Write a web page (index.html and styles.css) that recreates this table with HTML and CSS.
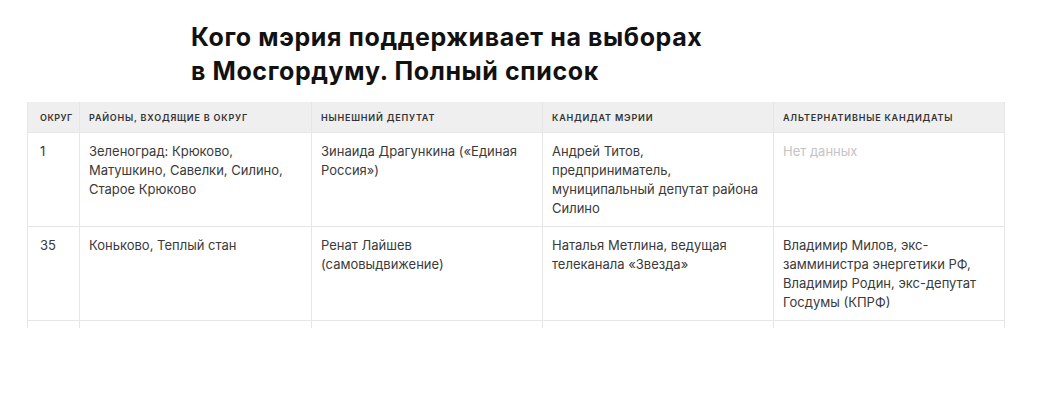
FILE: index.html
```html
<!DOCTYPE html>
<html lang="ru">
<head>
<meta charset="utf-8">
<link rel="stylesheet" href="styles.css">
</head>
<body>
<div class="page">
  <h1 class="title">Кого мэрия поддерживает на выборах<br>в Мосгордуму. Полный список</h1>
  <div class="table-wrap">
    <table class="tbl">
      <colgroup>
        <col class="c1"><col class="c2"><col class="c3"><col class="c4"><col class="c5">
      </colgroup>
      <thead>
        <tr>
          <th class="first">Округ</th>
          <th>Районы, входящие в округ</th>
          <th>Нынешний депутат</th>
          <th>Кандидат мэрии</th>
          <th>Альтернативные кандидаты</th>
        </tr>
      </thead>
      <tbody>
        <tr>
          <td class="first">1</td>
          <td>Зеленоград: Крюково, Матушкино, Савелки, Силино, Старое Крюково</td>
          <td>Зинаида Драгункина («Единая Россия»)</td>
          <td>Андрей Титов, предприниматель, муниципальный депутат района Силино</td>
          <td class="muted">Нет данных</td>
        </tr>
        <tr>
          <td class="first">35</td>
          <td>Коньково, Теплый стан</td>
          <td>Ренат Лайшев (самовыдвижение)</td>
          <td>Наталья Метлина, ведущая телеканала «Звезда»</td>
          <td>Владимир Милов, экс-замминистра энергетики РФ, Владимир Родин, экс-депутат Госдумы (КПРФ)</td>
        </tr>
        <tr class="empty">
          <td class="first">&nbsp;</td><td>&nbsp;</td><td>&nbsp;</td><td>&nbsp;</td><td>&nbsp;</td>
        </tr>
      </tbody>
    </table>
  </div>
</div>
</body>
</html>
```

FILE: styles.css
```css
html, body {
  margin: 0;
  padding: 0;
  background: #ffffff;
}

body {
  font-family: "Inter", "Liberation Sans", sans-serif;
  color: #333333;
}

.page {
  padding: 0 0 0 27px;
}

.title {
  margin: 0;
  padding: 20px 0 0 164px;
  font-family: "Inter", "Liberation Sans", sans-serif;
  font-weight: 700;
  font-size: 25px;
  line-height: 34px;
  color: #111111;
  letter-spacing: 0.6px;
}

.table-wrap {
  margin-top: 14px;
  width: 978px;
  height: 226px;
  overflow: hidden;
}

.tbl {
  width: 977px;
  border-collapse: collapse;
  table-layout: fixed;
}

.c1 { width: 52px; }
.c2 { width: 232px; }
.c3 { width: 231px; }
.c4 { width: 231px; }
.c5 { width: 231px; }

.tbl th,
.tbl td {
  border: 1px solid #e6e6e6;
  text-align: left;
  vertical-align: top;
  padding: 0 9px;
}

.tbl th {
  background: #efefef;
  height: 30px;
  box-sizing: border-box;
  vertical-align: middle;
  font-size: 9px;
  font-weight: 600;
  text-transform: uppercase;
  letter-spacing: 0.8px;
  color: #333333;
  border-top-color: #efefef;
}

.tbl td {
  font-size: 13px;
  line-height: 19px;
  padding-top: 9px;
  padding-bottom: 8px;
  height: 94px;
  box-sizing: border-box;
  color: #3a3a3a;
}

.tbl .first {
  padding-left: 12px;
  padding-right: 2px;
}

.tbl th.first {
  letter-spacing: 0.5px;
}

.tbl td.muted {
  color: #c4c4c4;
}
```
